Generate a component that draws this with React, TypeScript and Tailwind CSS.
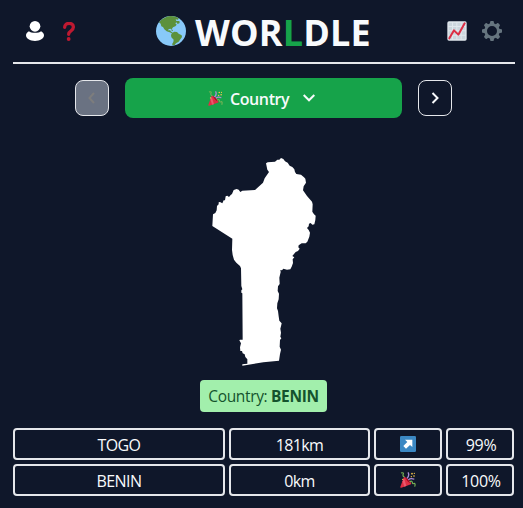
import React from "react";

function Globe() {
  return (
    <svg className="size-[30px] shrink-0" viewBox="0 0 90 90">
      <circle cx="45" cy="45" r="45" fill="#88C9F9" />
      <path
        fill="#5C913B"
        d="M9 19 C18 8 30 1 44 0 C53 0 61 2 68 7 L66 11 L59 10 L61 15 L70 15 L71 21 L65 24 L61 19 L58 22 L62 26 L58 31 L51 34 L47 40 L43 38 L37 40 L38 44 L42 42 L44 46 L47 48 L50 50 L48 52 L41 49 L32 46 L25 40 L21 33 L16 31 L14 23 Z M48 51 L55 47 L63 48 L68 53 L77 58 L78 63 L72 71 L68 77 L60 82 L56 87 L51 88 L48 85 L52 78 L53 71 L46 64 L45 57 Z"
      />
      <path fill="#5C913B" d="M45 40 L51 42 L50 45 L46 43 Z" />
    </svg>
  );
}

function Person() {
  return (
    <svg className="h-5 w-[18px]" viewBox="0 0 54 60" fill="#fff">
      <circle cx="27" cy="16" r="16" />
      <path d="M9 31 C15 37 39 37 45 31 C50 33 54 38 54 43 C54 53 42 60 27 60 C12 60 0 53 0 43 C0 38 4 33 9 31 Z" />
    </svg>
  );
}

function Question() {
  return (
    <svg className="h-[19px] w-3" viewBox="0 0 36 57">
      <path d="M5 16 C5 0 32 0 31 16 C31 28 17 25 17 37" fill="none" stroke="#BE1931" strokeWidth="10" strokeLinecap="round" />
      <circle cx="17" cy="51" r="5.8" fill="#BE1931" />
    </svg>
  );
}

function Chart() {
  return (
    <svg className="size-5" viewBox="0 0 60 60">
      <rect x="1" y="1" width="58" height="58" rx="5" fill="#E1E8ED" />
      <path fill="#CCD6DD" d="M5 5h10v10H5zM18 5h10v10H18zM31 5h10v10H31zM44 5h11v10H44zM5 18h10v10H5zM18 18h10v10H18zM31 18h10v10H31zM44 18h11v10H44zM5 31h10v10H5zM18 31h10v10H18zM31 31h10v10H31zM44 31h11v10H44zM5 44h10v11H5zM18 44h10v11H18zM31 44h10v11H31zM44 44h11v11H44z" />
      <path d="M7 52 L21 28 L34 41 L53 7" fill="none" stroke="#DD2E44" strokeWidth="6" strokeLinecap="round" strokeLinejoin="round" />
    </svg>
  );
}

function Gear() {
  const teeth = [0, 45, 90, 135, 180, 225, 270, 315];
  return (
    <svg className="size-5" viewBox="0 0 60 60">
      <circle cx="30" cy="30" r="19" fill="none" stroke="#66757F" strokeWidth="8" />
      {teeth.map((angle) => (
        <path key={angle} d="M23 10 L25 1.5 Q25.5 0 27 0 H33 Q34.500 0 35 1.5 L37 10 Z" fill="#66757F" transform={`rotate(${angle} 30 30)`} />
      ))}
    </svg>
  );
}

function Popper({ className }: { className: string }) {
  return (
    <svg className={className} viewBox="0 0 48 48">
      <path d="M20 20 Q30 11 24 1" fill="none" stroke="#AA8DD8" strokeWidth="4" />
      <path d="M3 3 Q13 0 9 8 Q8 13 14 16" fill="none" stroke="#77B255" strokeWidth="3.5" />
      <path d="M12 15 Q16 14 27 24 Q36 34 33 37 L4 47 Q0 48 1 44 Z" fill="#DD2E44" />
      <path d="M12 18 L19 42 L13 44 L8 28 Z" fill="#EA596E" />
      <path d="M16 17 Q25 20 31 33 Q24 31 16 17 Z" fill="#A0041E" />
      <path d="M25 23 Q33 17 43 22" fill="none" stroke="#AA8DD8" strokeWidth="3.5" />
      <path d="M29 29 Q37 25 37 32 Q38 37 43 34 Q47 35 44 44" fill="none" stroke="#77B255" strokeWidth="3.5" />
      <g fill="#FFCC4D">
        <circle cx="36" cy="5" r="2.5" />
        <circle cx="43" cy="4" r="2" />
        <circle cx="42" cy="12" r="2.5" />
        <circle cx="34" cy="14" r="2" />
        <circle cx="8" cy="22" r="2" />
      </g>
    </svg>
  );
}

function ArrowTile() {
  return (
    <svg className="size-4" viewBox="0 0 48 48">
      <rect width="48" height="48" rx="4" fill="#3B88C3" />
      <path d="M15 11 H37 V33 L30 27 L18 38 L10 30 L22 18 Z" fill="#fff" />
    </svg>
  );
}

function BeninShape() {
  return (
    <svg className="h-[220px] w-[140px]" viewBox="0 0 420 660">
      <path
        fill="#fff"
        d="M213 40 L218 37 L240 35 L247 29 L253 29 L258 24 L265 27 L270 34 L278 38 L284 47 L292 51 L298 58 L300 66 L304 72 L318 74 L327 82 L331 86 L333 98 L326 109 L324 121 L336 138 L351 155 L353 163 L352 185 L357 193 L362 197 L361 210 L358 223 L352 224 L347 219 L342 221 L341 229 L336 234 L341 240 L345 248 L343 260 L337 275 L332 280 L320 280 L311 286 L310 292 L314 296 L309 303 L302 306 L292 318 L298 322 L293 328 L294 339 L290 350 L286 358 L276 359 L265 356 L261 361 L256 360 L257 366 L253 383 L254 402 L249 409 L248 423 L252 431 L251 448 L247 460 L246 475 L249 483 L251 499 L253 512 L260 520 L258 529 L256 536 L258 548 L256 560 L259 565 L255 570 L254 590 L258 599 L255 612 L252 632 L205 637 L142 647 L142 643 L157 641 L157 628 L151 621 L149 613 L143 610 L141 603 L136 603 L135 592 L138 580 L133 571 L135 569 L143 569 L142 430 L139 428 L139 421 L142 418 L139 408 L138 355 L135 348 L124 338 L117 329 L113 315 L111 300 L112 266 L52 228 L54 193 L61 189 L65 181 L66 168 L71 163 L71 157 L75 156 L82 160 L86 151 L90 151 L92 139 L97 137 L102 141 L107 135 L111 132 L116 120 L125 117 L131 119 L136 126 L142 122 L180 120 L204 98 L209 85 L222 66 L217 59 Z"
      />
    </svg>
  );
}

function Chevron({ path, className }: { path: string; className: string }) {
  return (
    <svg className={className} viewBox="0 0 12 12" fill="none" stroke="currentColor" strokeWidth="2">
      <path d={path} />
    </svg>
  );
}

function Guess({ name, distance, percent, icon }: { name: string; distance: string; percent: string; icon: React.ReactNode }) {
  const cell = "flex h-8 items-center justify-center rounded border-2 border-gray-200";
  return (
    <div className="grid grid-cols-[212px_141px_68px_68px] gap-1">
      <div className={cell}><span className="translate-y-px tracking-[-0.6px]">{name}</span></div>
      <div className={cell}><span className="translate-y-px tracking-[-0.6px]">{distance}</span></div>
      <div className={cell}>{icon}</div>
      <div className={cell}><span className="translate-x-px translate-y-px tracking-[-0.3px]">{percent}</span></div>
    </div>
  );
}

export default function App() {
  return (
    <div className="h-[508px] w-[523px] overflow-hidden bg-[#0f172a] pl-[13px] pr-2 font-['Open_Sans','Noto_Sans',sans-serif] text-base text-slate-50">
      <header className="flex h-16 items-center border-b-2 border-gray-200">
        <div className="flex w-[143px] items-center gap-[19px] pl-[13px]">
          <Person />
          <Question />
        </div>
        <h1 className="flex w-[278px] items-center gap-[9px] whitespace-nowrap text-4xl font-bold leading-[62px]">
          <Globe />
          <span className="translate-y-[2px] tracking-[0.15px]">WOR<span className="text-[#16a34a]">L</span>DLE</span>
        </h1>
        <div className="flex items-center gap-[15px] pl-[13px]">
          <Chart />
          <Gear />
        </div>
      </header>

      <nav className="mt-3.5 flex items-center gap-4 pl-[62px]">
        <button className="flex h-9 w-[34px] items-center justify-center rounded-lg border border-gray-200 bg-gray-500 text-[#7d7d7d]">
          <Chevron className="size-3" path="M8 1 L3.5 6 L8 11" />
        </button>
        <button className="flex h-10 w-[277px] items-center rounded-lg bg-[#16a34a] pl-[83px] font-semibold">
          <Popper className="size-[15px]" />
          <span className="ml-[7px] w-[59px] translate-y-px whitespace-nowrap tracking-[-0.4px]">Country</span>
          <Chevron className="ml-[14px] size-3" path="M0.7 3 L6 8.3 L11.3 3" />
        </button>
        <button className="flex h-9 w-[34px] items-center justify-center rounded-lg border border-gray-200">
          <Chevron className="size-3" path="M3.5 1 L8.5 6 L3.5 11" />
        </button>
      </nav>

      <div className="mt-8 pl-[182px]">
        <BeninShape />
      </div>

      <div className="ml-[187px] mt-2.5 flex h-8 w-[127px] items-center justify-center whitespace-nowrap rounded bg-[#a2efac] text-[15.5px] tracking-[-0.35px] text-[#14532d]">
        <span className="translate-y-px">Country: <b>BENIN</b></span>
      </div>

      <main className="mt-4 flex flex-col gap-1">
        <Guess name="TOGO" distance="181km" percent="99%" icon={<ArrowTile />} />
        <Guess name="BENIN" distance="0km" percent="100%" icon={<Popper className="size-4" />} />
      </main>
    </div>
  );
}
